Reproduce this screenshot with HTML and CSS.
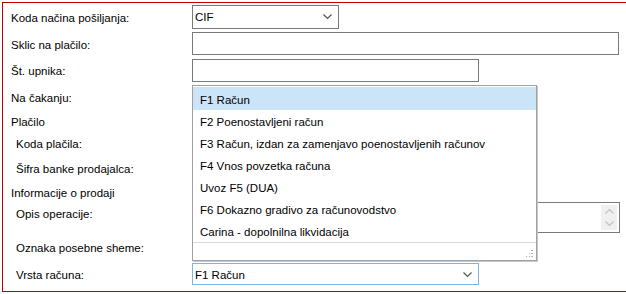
FILE: index.html
```html
<!DOCTYPE html>
<html lang="sl">

<head>
    <meta charset="UTF-8">
    <meta name="viewport" content="width=device-width, initial-scale=1.0">
    <title>Podatki o prodaji</title>
    <link rel="stylesheet" href="styles.css">
</head>

<body>

    <div class="form-box">

        <div class="row r1">
            <label class="lbl">Koda načina pošiljanja:</label>
            <div class="combo w-short">
                <span>CIF</span>
                <svg class="chev" width="9" height="6" viewBox="0 0 9 6"><polyline points="0.5,0.5 4.5,4.5 8.5,0.5" /></svg>
            </div>
        </div>

        <div class="row r2">
            <label class="lbl">Sklic na plačilo:</label>
            <div class="input w-long"></div>
        </div>

        <div class="row r3">
            <label class="lbl">Št. upnika:</label>
            <div class="input w-mid"></div>
        </div>

        <div class="row r4">
            <label class="lbl">Na čakanju:</label>
            <div class="combo w-short"></div>
        </div>

        <div class="row r5">
            <span class="group">Plačilo</span>
        </div>

        <div class="row r6 sub">
            <label class="lbl">Koda plačila:</label>
        </div>

        <div class="row r7 sub">
            <label class="lbl">Šifra banke prodajalca:</label>
        </div>

        <div class="row r8">
            <span class="group">Informacije o prodaji</span>
        </div>

        <div class="row r9 sub top">
            <label class="lbl">Opis operacije:</label>
            <div class="memo w-long2">
                <div class="spin">
                    <svg width="9" height="6" viewBox="0 0 9 6"><polyline points="0.5,5.5 4.5,1.5 8.5,5.5" /></svg>
                    <svg width="9" height="6" viewBox="0 0 9 6"><polyline points="0.5,0.5 4.5,4.5 8.5,0.5" /></svg>
                </div>
            </div>
        </div>

        <div class="row r10 sub">
            <label class="lbl">Oznaka posebne sheme:</label>
        </div>

        <div class="row r11 sub">
            <label class="lbl">Vrsta računa:</label>
            <div class="combo w-mid focus">
                <span>F1 Račun</span>
                <svg class="chev" width="9" height="6" viewBox="0 0 9 6"><polyline points="0.5,0.5 4.5,4.5 8.5,0.5" /></svg>
            </div>
        </div>

        <!-- odprt seznam za Vrsta računa -->
        <div class="dropdown">
            <ul class="items">
                <li class="sel">F1 Račun</li>
                <li>F2 Poenostavljeni račun</li>
                <li>F3 Račun, izdan za zamenjavo poenostavljenih računov</li>
                <li>F4 Vnos povzetka računa</li>
                <li>Uvoz F5 (DUA)</li>
                <li>F6 Dokazno gradivo za računovodstvo</li>
                <li>Carina - dopolnilna likvidacija</li>
            </ul>
            <div class="grip-bar">
                <svg class="grip" width="7" height="7" viewBox="0 0 7 7">
                    <rect x="5" y="0" width="2" height="1" />
                    <rect x="3" y="3" width="1" height="1" /><rect x="5" y="3" width="2" height="1" />
                    <rect x="0" y="6" width="1" height="1" /><rect x="3" y="6" width="1" height="1" /><rect x="5" y="6" width="2" height="1" />
                </svg>
            </div>
        </div>

    </div>

</body>

</html>
```

FILE: styles.css
```css
body {
    margin: 0;
    font-family: "Liberation Sans", Arial, sans-serif;
    font-size: 11.5px;
    color: #000000;
    background: #ffffff;
}

.form-box {
    position: relative;
    margin: 2px;
    width: 620px;
    height: 288px;
    border: 1px solid #c00000;
    padding-left: 8px;
}

.row {
    display: flex;
    align-items: center;
}

.row.top {
    align-items: flex-start;
}

.lbl {
    width: 181px;
    flex-shrink: 0;
    padding-top: 2px;
}

.group {
    padding-top: 2px;
}

.sub .lbl {
    padding-left: 5px;
    width: 176px;
}

.r1 { height: 27px; }
.r2 { height: 27px; }
.r3 { height: 26px; }
.r4 { height: 27px; }
.r5 { height: 21px; }
.r6 { height: 24px; }
.r7 { height: 25px; }
.r8 { height: 22px; }
.r9 { height: 30px; }
.r10 { height: 29px; }
.r11 { height: 26px; }

.r8 .group {
    padding-top: 4px;
}

.r9 .lbl {
    padding-top: 6px;
}

.r10 .lbl {
    padding-top: 3px;
}

.combo {
    height: 22px;
    box-sizing: border-box;
    border: 1px solid #7a7a7a;
    display: flex;
    align-items: center;
    justify-content: space-between;
    padding: 1px 6px 0 2px;
}

.r1 .combo {
    height: 24px;
}

.combo.focus {
    border-color: #7eb4ea;
}

.chev polyline,
.spin polyline {
    fill: none;
    stroke: #555555;
    stroke-width: 1.2;
}

.input {
    height: 23px;
    box-sizing: border-box;
    border: 1px solid #7a7a7a;
}

.w-short { width: 147px; }
.w-mid { width: 287px; }
.w-long { width: 427px; }
.w-long2 { width: 428px; }

.memo {
    height: 31px;
    box-sizing: border-box;
    border: 1px solid #7a7a7a;
    display: flex;
    justify-content: flex-end;
    padding: 2px;
}

.spin {
    width: 16px;
    background: #f0f0f0;
    display: flex;
    flex-direction: column;
    align-items: center;
    justify-content: space-around;
}

.spin polyline {
    stroke: #c2c2c2;
}

.dropdown {
    position: absolute;
    left: 189px;
    top: 82px;
    width: 343px;
    height: 174px;
    background: #ffffff;
    border: 1px solid #a0a0a0;
    box-shadow: 1px 1px 0 #c8c8c8;
    display: flex;
    flex-direction: column;
}

.items {
    list-style: none;
    margin: 1px 0 0 0;
    padding: 0;
    flex: 1;
}

.items li {
    height: 22px;
    line-height: 24px;
    padding-left: 7px;
    white-space: nowrap;
}

.items li.sel {
    height: 23px;
    line-height: 26px;
    background: #cce4f7;
}

.grip-bar {
    height: 18px;
    border-top: 1px solid #dadada;
    display: flex;
    justify-content: flex-end;
    align-items: flex-end;
    padding: 0 3px 3px 0;
}

.grip rect {
    fill: #b4b4b4;
}
```
